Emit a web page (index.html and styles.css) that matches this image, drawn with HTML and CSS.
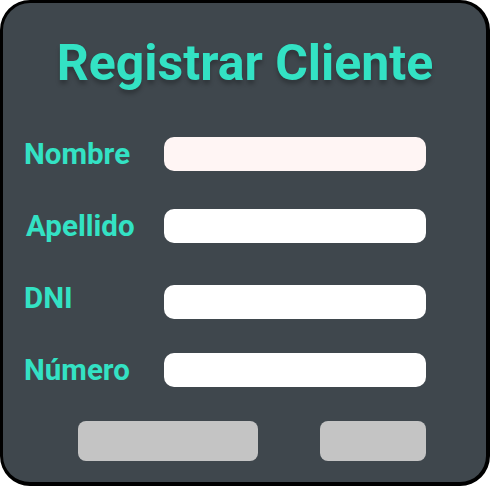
FILE: index.html
```html
<!DOCTYPE html>
<html>
<head>
<meta charset="utf-8">
<link rel="stylesheet" href="styles.css">
</head>
<body>
<div class="card">
  <h1 class="title">Registrar Cliente</h1>
  <div class="rows">
    <div class="row r1"><label class="label">Nombre</label><div class="input tinted"></div></div>
    <div class="row r2"><label class="label">Apellido</label><div class="input"></div></div>
    <div class="row r3"><label class="label">DNI</label><div class="input"></div></div>
    <div class="row r4"><label class="label">Número</label><div class="input"></div></div>
  </div>
  <div class="buttons">
    <div class="btn wide"></div>
    <div class="btn narrow"></div>
  </div>
</div>
</body>
</html>
```
FILE: styles.css
```css
html, body { margin: 0; padding: 0; background: #ffffff; }
.card {
  box-sizing: border-box;
  width: 490px;
  height: 486px;
  background: #3f474d;
  border: 3px solid #000;
  border-right-width: 4px;
  border-bottom-width: 4px;
  border-radius: 30px;
  font-family: Roboto, "Liberation Sans", sans-serif;
  padding: 0 60px 0 21px;
  display: flex;
  flex-direction: column;
}
.title {
  margin: 31px -40px 0 0;
  text-align: center;
  white-space: nowrap;
  font-size: 50px;
  font-weight: 700;
  line-height: 58px;
  color: #33e2c4;
  text-shadow: 0 4px 4px rgba(0,0,0,0.25);
}
.rows { display: flex; flex-direction: column; margin-top: 45px; }
.row { display: flex; align-items: center; height: 34px; }
.r2 { margin-top: 38px; }
.r3 { margin-top: 42px; }
.r4 { margin-top: 34px; }
.label {
  width: 140px;
  font-size: 29.5px;
  font-weight: 700;
  line-height: 34px;
  color: #33e2c4;
}
.r2 .label { padding-left: 2px; width: 138px; }
.r3 .label { margin-bottom: 8px; }
.input {
  flex: 1;
  height: 34px;
  background: #ffffff;
  border-radius: 10px;
}
.input.tinted { background: #fff5f4; }
.buttons { display: flex; margin-top: 34px; padding-left: 54px; gap: 62px; }
.btn { height: 40px; background: #c4c4c4; border-radius: 8px; }
.wide { width: 180px; }
.narrow { width: 106px; }
```
